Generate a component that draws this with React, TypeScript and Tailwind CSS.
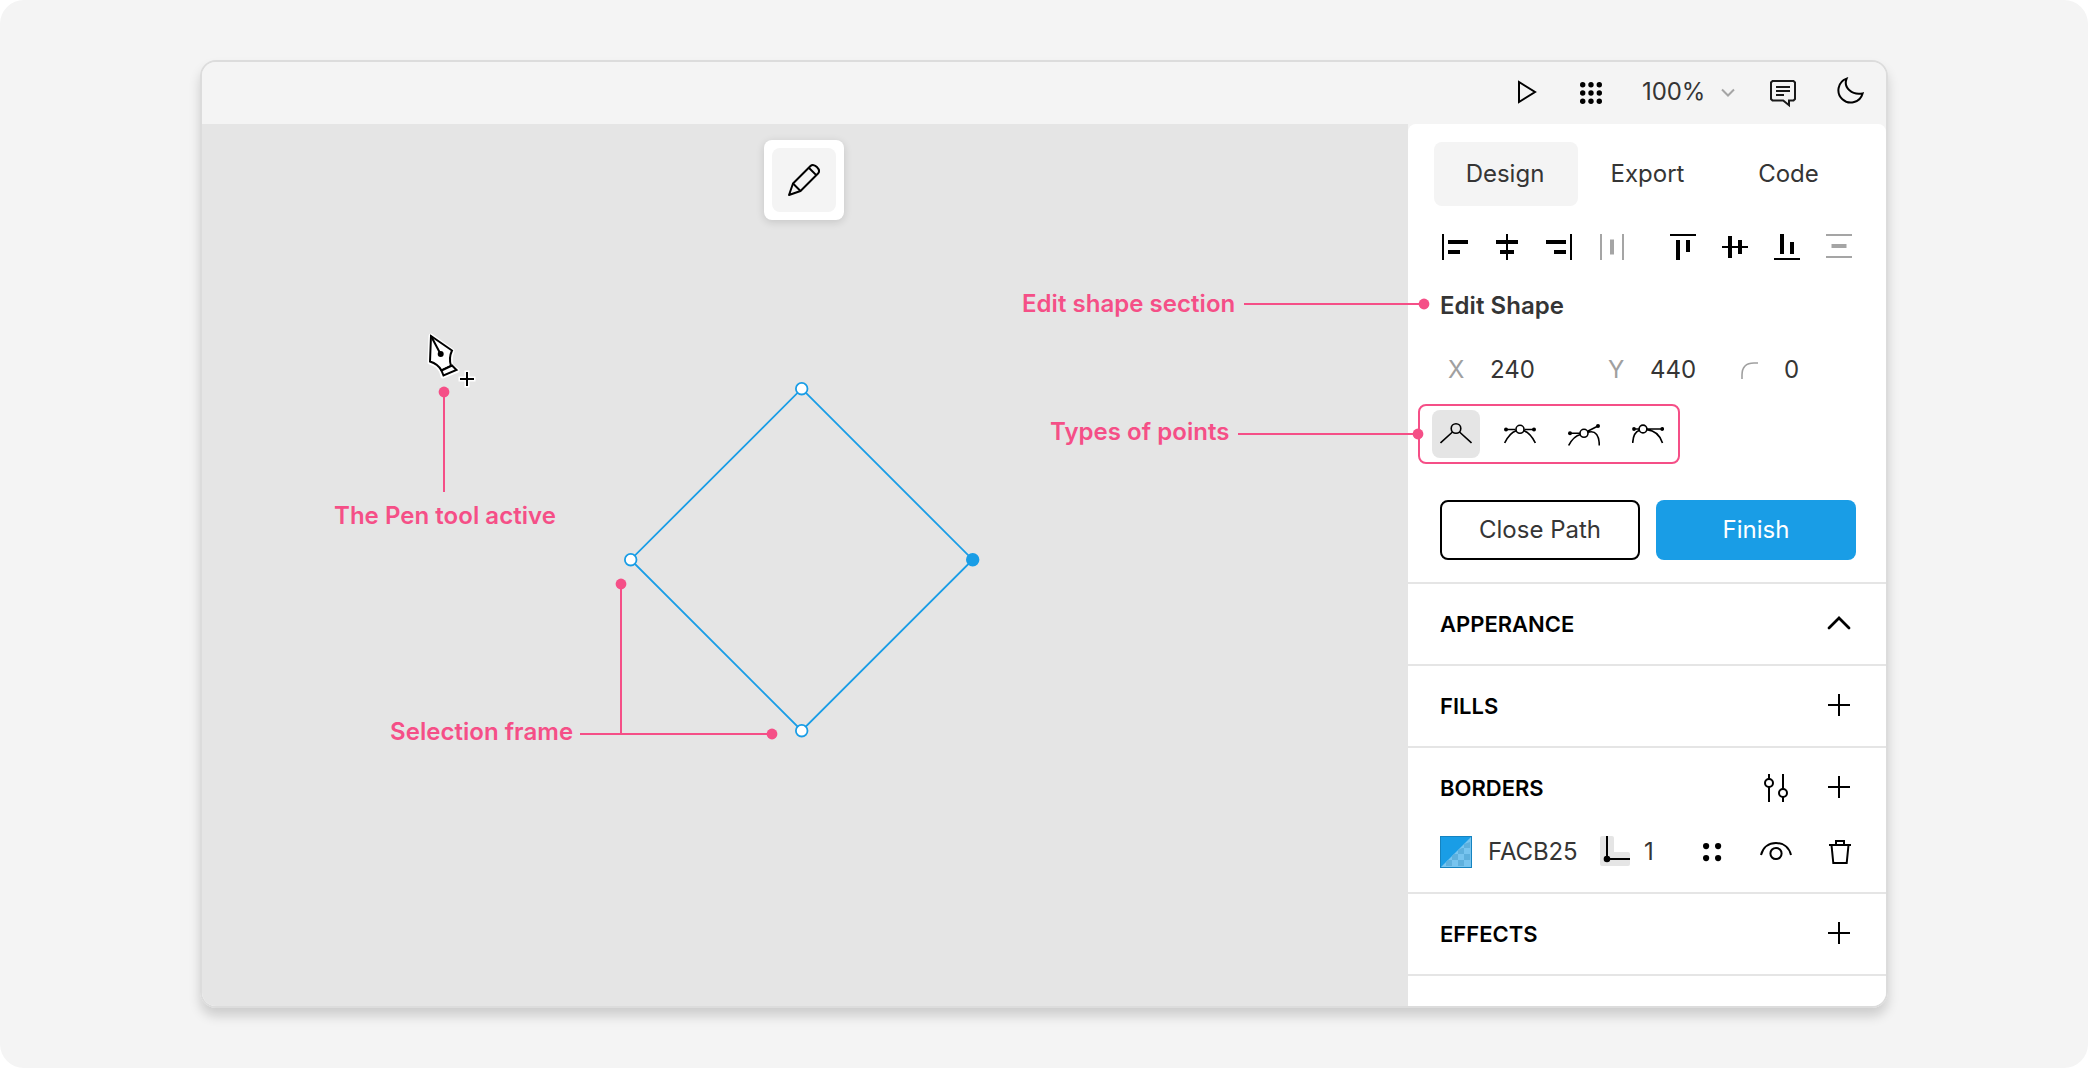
import type { ReactNode } from "react";

const PINK = "#f54f87";
const BLUE = "#199de6";

function Plus() {
  return (
    <svg width="22" height="22" viewBox="0 0 22 22" stroke="#000" strokeWidth="2" fill="none">
      <path d="M11 0V22M0 11H22" />
    </svg>
  );
}

function Toolbar() {
  return (
    <header className="relative flex h-[62px] shrink-0 items-start bg-[#f4f4f4] text-[#353535]">
      <svg className="mt-[18px] ml-[1316px]" width="19" height="24" viewBox="0 0 19 24" fill="none" stroke="#000" strokeWidth="2">
        <path d="M1 2V22L17 12Z" />
      </svg>
      <svg className="mt-5 ml-[43px]" width="22" height="22" fill="#000">
        {[2.7, 11, 19.3].map((y) =>
          [2.7, 11, 19.3].map((x) => <circle key={`${x}-${y}`} cx={x} cy={y} r="2.7" />)
        )}
      </svg>
      <span className="mt-[14px] ml-[40px] w-[62px] whitespace-nowrap text-[24px] font-[380] leading-[32px] tracking-[-0.1px]">100%</span>
      <svg className="mt-[26px] ml-[17px]" width="14" height="10" fill="none" stroke="#a5a5a5" strokeWidth="2">
        <path d="M1 1.5L7 7.5L13 1.5" />
      </svg>
      <svg className="mt-[17px] ml-[35px]" width="28" height="29" viewBox="0 0 28 29" fill="none" stroke="#1a1a1a" strokeWidth="2">
        <path d="M2.5 2H23.5L25 3.5V20L23.5 21.5H19V26.2L13.2 21.5H2.5L1 20V3.5Z" />
        <path d="M6 8H20M6 12H20M6 16H14" />
      </svg>
      <svg className="mt-[14px] ml-[38px]" width="29" height="28" viewBox="0 0 29 28" fill="none" stroke="#000" strokeWidth="2">
        <path d="M10.6 2.6A12.3 12.3 0 1 0 26.6 17.4C16.5 19.6 7 12 10.6 2.6Z" />
      </svg>
    </header>
  );
}

function AlignIcons() {
  return (
    <svg className="mt-7 ml-[34px] block" width="410" height="26" viewBox="0 0 410 26" fill="#000">
      <path d="M0 0h2v26h-2zM6 6h20v4h-20zM6 16h12v4h-12z" />
      <path d="M64 0h2v26h-2zM54 6h22v4h-22zM58 16h14v4h-14z" />
      <path d="M128 0h2v26h-2zM104 6h20v4h-20zM112 16h12v4h-12z" />
      <path d="M158 0h2v26h-2zM180 0h2v26h-2zM168 5.5h4v15h-4z" fill="#a5a5a5" />
      <path d="M228 0h26v2h-26zM234 6h4v20h-4zM244 6h4v12h-4z" />
      <path d="M280 12h26v2h-26zM286 2h4v22h-4zM296 6h4v14h-4z" />
      <path d="M332 24h26v2h-26zM338 0h4v20h-4zM348 8h4v12h-4z" />
      <path d="M384 0h26v2h-26zM384 22h26v2h-26zM389.5 10h15v4h-15z" fill="#a5a5a5" />
    </svg>
  );
}

function PointTypes() {
  return (
    <div className="mt-4 ml-[10px] flex h-[60px] w-[262px] shrink-0 items-center gap-4 rounded-lg border-2 border-[#f54f87] pl-3">
      <div className="flex size-12 shrink-0 items-center justify-center rounded-lg bg-[#e5e5e5]">
        <svg className="-mt-[3px]" width="32" height="22" fill="none" stroke="#000" strokeWidth="1.6">
          <path d="M.5 21L12.5 10M31.5 21L19.5 10" />
          <circle cx="16" cy="6.5" r="4.8" />
        </svg>
      </div>
      <svg className="mx-2 -mt-[2px] shrink-0" width="32" height="22" fill="none" stroke="#000" strokeWidth="1.6">
        <path d="M2 7.5H11.5M20.5 7.5H30M.7 21C4 14 8 10 12.3 8.7M31.3 21C28 14 24 10 19.7 8.7" />
        <circle cx="16" cy="7.3" r="4" />
        <circle cx="2" cy="7.5" r="2" fill="#000" stroke="none" />
        <circle cx="30" cy="7.5" r="2" fill="#000" stroke="none" />
      </svg>
      <svg className="mx-2 shrink-0" width="32" height="24" fill="none" stroke="#000" strokeWidth="1.6">
        <path d="M2 11.3H12M19.7 9.3L30 4M.7 23.5C4 17 8 13.5 12.6 12.5M20 10.3C28 8 31.3 14 31.3 23.5" />
        <circle cx="16" cy="11.3" r="4" />
        <circle cx="2" cy="11.3" r="2" fill="#000" stroke="none" />
        <circle cx="30" cy="4" r="2" fill="#000" stroke="none" />
      </svg>
      <svg className="mx-2 -mt-[2px] shrink-0" width="32" height="22" fill="none" stroke="#000" strokeWidth="1.6">
        <path d="M2 7H7M15 7H30M.7 21C1 14 4 9.5 7.5 8.3M14.8 7.6C23 8.5 28 13 30.5 21" />
        <circle cx="11" cy="7" r="3.9" />
        <circle cx="2" cy="7" r="1.9" fill="#000" stroke="none" />
        <circle cx="30.2" cy="7" r="1.9" fill="#000" stroke="none" />
      </svg>
    </div>
  );
}

function SectionRow({ title, children }: { title: string; children: ReactNode }) {
  return (
    <div className="flex h-20 items-center justify-between pr-9 pl-8 text-black">
      <h2 className="text-[22px] font-semibold leading-7">{title}</h2>
      <div className="flex items-center gap-10 pb-[2px]">{children}</div>
    </div>
  );
}

function BorderRow() {
  return (
    <div className="flex h-16 items-start pt-2 pl-8">
      <svg width="32" height="32">
        <rect width="32" height="32" fill={BLUE} />
        <path d="M32 0V32H0Z" fill="#77c4ef" />
        <path d="M24 8L30 6V12H24ZM18 14V18H24V12L22 12ZM24 18H30V24H24ZM18 18V24H12V20L14 18ZM18 24H24V30H18ZM6 26V30H12V24H8Z" fill="#5eb0dd" />
        <rect x=".5" y=".5" width="31" height="31" fill="none" stroke="#1583c0" />
      </svg>
      <span className="ml-4 w-[96px] text-[24px] leading-8 tracking-[-0.1px]">FACB25</span>
      <svg className="ml-4" width="30" height="30">
        <path d="M2 0H12Q14 0 14 2V16H28Q30 16 30 18V28Q30 30 28 30H2Q0 30 0 28V2Q0 0 2 0Z" fill="#e5e5e5" />
        <path d="M7 0V23H30" fill="none" stroke="#000" strokeWidth="2" />
        <circle cx="7" cy="23" r="3.3" />
      </svg>
      <span className="ml-[14px] w-4 text-[24px] leading-8">1</span>
      <svg className="mt-[7px] ml-[43px]" width="19" height="19">
        <circle cx="3.1" cy="3.1" r="3.1" />
        <circle cx="15.1" cy="3.1" r="3.1" />
        <circle cx="3.1" cy="15.1" r="3.1" />
        <circle cx="15.1" cy="15.1" r="3.1" />
      </svg>
      <svg className="mt-[5px] ml-[38px]" width="32" height="20" fill="none" stroke="#000" strokeWidth="2">
        <path d="M1 14C3 6 9 2 16 2S29 6 31 14" />
        <circle cx="16" cy="12.5" r="5.6" />
      </svg>
      <svg className="mt-[4px] ml-[37px]" width="22" height="24" fill="none" stroke="#000" strokeWidth="2">
        <path d="M0 5H22M2.5 5L4.3 23H17.7L19.5 5" />
        <path d="M7 4.5V1H15V4.5" />
      </svg>
    </div>
  );
}

function Inspector() {
  return (
    <aside className="flex w-[478px] shrink-0 flex-col rounded-t-lg bg-white font-[380] text-[#353535]">
      <nav className="mt-[18px] ml-[26px] flex text-[24px] leading-[62px]">
        <button className="h-16 w-36 rounded-lg bg-[#f4f4f4] pr-[2px]">Design</button>
        <button className="h-16 w-[139px]">Export</button>
        <button className="h-16 w-[143px]">Code</button>
      </nav>
      <AlignIcons />
      <h2 className="mt-7 ml-8 h-9 text-[24px] font-semibold leading-9 tracking-[0.04px]">Edit Shape</h2>
      <div className="mt-7 flex h-9 items-center text-[24px] leading-9">
        <span className="ml-10 w-[42px] text-[#a0a0a0]">X</span>
        <span className="w-[118px]">240</span>
        <span className="w-[42px] text-[#a0a0a0]">Y</span>
        <span className="w-[91px]">440</span>
        <svg className="mr-[26px]" width="17" height="17" fill="none" stroke="#a0a0a0" strokeWidth="1.6">
          <path d="M1 17V13Q1 1 13 1H17" />
        </svg>
        <span>0</span>
      </div>
      <PointTypes />
      <div className="mt-9 flex gap-4 pl-8 text-[24px]">
        <button className="h-[60px] w-[200px] rounded-lg border-2 border-black">Close Path</button>
        <button className="h-[60px] w-[200px] rounded-lg bg-[#199de6] text-white">Finish</button>
      </div>
      <div className="mt-[22px] divide-y-2 divide-[#e5e5e5] border-y-2 border-[#e5e5e5]">
        <section>
          <SectionRow title="APPERANCE">
            <svg className="-mr-[1px]" width="24" height="14" fill="none" stroke="#000" strokeWidth="2.8" strokeLinecap="round">
              <path d="M2 12L12 2L22 12" />
            </svg>
          </SectionRow>
        </section>
        <section>
          <SectionRow title="FILLS">
            <Plus />
          </SectionRow>
        </section>
        <section>
          <SectionRow title="BORDERS">
            <svg className="mt-[2px]" width="24" height="28" fill="none" stroke="#000" strokeWidth="2">
              <path d="M5 0V5M5 13V28M19 0V15M19 23V28" />
              <circle cx="5" cy="9" r="4" />
              <circle cx="19" cy="19" r="4" />
            </svg>
            <Plus />
          </SectionRow>
          <BorderRow />
        </section>
        <section>
          <SectionRow title="EFFECTS">
            <Plus />
          </SectionRow>
        </section>
      </div>
    </aside>
  );
}

function Canvas() {
  return (
    <main className="relative flex-1 bg-[#e5e5e5]">
      <div className="absolute top-4 left-[562px] size-20 rounded-lg bg-white p-2 shadow-[0_2px_8px_rgba(0,0,0,0.14)]">
        <div className="flex size-16 items-center justify-center rounded-lg bg-[#f4f4f4]">
          <svg width="34" height="34" viewBox="0 0 34 34" fill="none" stroke="#000" strokeWidth="2" strokeLinejoin="round">
            <path d="M2 32L6 20.5L23.5 3C27 -.5 34.5 6.5 31 10.5L13.5 28Z" />
            <path d="M6 20.5L13.5 28M21.8 4.7L29.5 12.4" />
          </svg>
        </div>
      </div>

      <svg className="absolute top-[208px] left-[224px]" width="56" height="60" fill="none">
        <g stroke="#fff" strokeWidth="5" strokeLinejoin="round">
          <path d="M5 4L26 19Q23 26 25 34L31 38.5L17 44L15.5 39Q12 32 4 30Z" />
          <path d="M41 41V53M35 47H47" strokeLinecap="square" strokeWidth="5" />
        </g>
        <g stroke="#000" strokeWidth="2" fill="#fff">
          <path d="M5 4L26 18.5Q22.5 26 25 34L15.5 38.5Q12 32 4 29.5Z" />
          <path d="M15.5 38.5L26 33.5L30.5 38L17.5 43.5Z" />
          <path d="M5 4L14 21M41 40V54M34 47H48" />
        </g>
        <circle cx="14.7" cy="22" r="3" fill="#000" />
      </svg>

      <svg className="absolute top-[252px] left-[416px]" width="370" height="370" viewBox="0.3 0.3 370 370" fill="#fff" stroke={BLUE} strokeWidth="1.8">
        <path d="M184 13L355 184L184 355L13 184Z" fill="none" />
        <circle cx="184" cy="13" r="5.8" />
        <circle cx="13" cy="184" r="5.8" />
        <circle cx="184" cy="355" r="5.8" />
        <circle cx="355" cy="184" r="5.8" fill={BLUE} />
      </svg>
    </main>
  );
}

const labels = [
  { text: "Edit shape section", place: "left-[1022px] top-[286px]" },
  { text: "Types of points", place: "left-[1050px] top-[414px]" },
  { text: "The Pen tool active", place: "left-[334px] top-[498px]" },
  { text: "Selection frame", place: "left-[390px] top-[714px]" },
];

function Annotations() {
  return (
    <div className="pointer-events-none absolute inset-0 text-[24px] font-semibold leading-9 tracking-[0.04px] text-[#f54f87]">
      <svg className="absolute inset-0" width="2088" height="1068" fill={PINK}>
        <g stroke={PINK} strokeWidth="2">
          <path d="M1244 304H1424M1238 434H1418M444 392V492M621 584V734M580 734H772" />
        </g>
        <circle cx="1424" cy="304" r="5.4" />
        <circle cx="1418" cy="434" r="5.4" />
        <circle cx="444" cy="392" r="5.4" />
        <circle cx="621" cy="584" r="5.4" />
        <circle cx="772" cy="734" r="5.4" />
      </svg>
      {labels.map((l) => (
        <span key={l.text} className={`absolute whitespace-nowrap ${l.place}`}>{l.text}</span>
      ))}
    </div>
  );
}

export default function App() {
  return (
    <div className="h-[1068px] w-[2088px] bg-white font-['Inter',sans-serif]">
      <div className="relative h-full w-full rounded-3xl bg-[#f4f4f4] px-[200px] pt-[60px]">
        <div className="flex h-[948px] flex-col overflow-hidden rounded-2xl border-2 border-[#dcdcdc] shadow-[0_8px_12px_rgba(0,0,0,0.16)]">
          <Toolbar />
          <div className="flex min-h-0 flex-1 bg-[#f4f4f4]">
            <Canvas />
            <Inspector />
          </div>
        </div>
        <Annotations />
      </div>
    </div>
  );
}
